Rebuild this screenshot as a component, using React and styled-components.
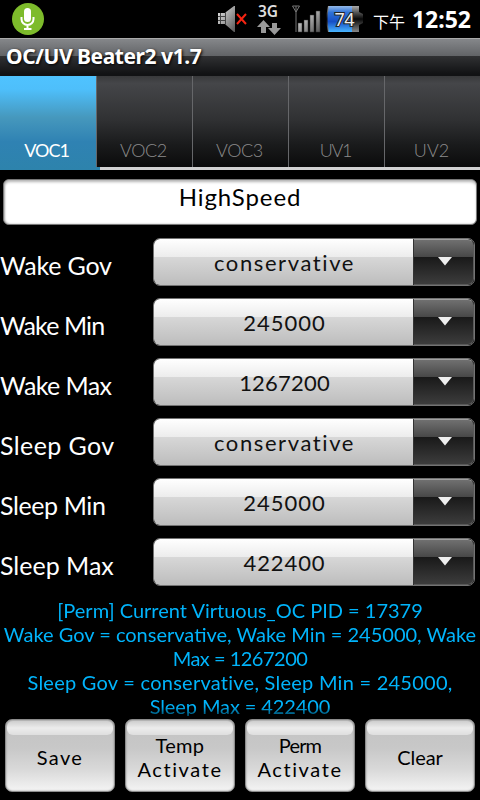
import styled, { createGlobalStyle } from 'styled-components';

const GlobalStyle = createGlobalStyle`
  * {
    box-sizing: border-box;
  }

  body {
    margin: 0;
    background: #000;
  }
`;

const Screen = styled.div`
  width: 480px;
  height: 800px;
  display: flex;
  flex-direction: column;
  overflow: hidden;
  background: #000;
  font-family: Lato, 'Open Sans', sans-serif;
`;

const StatusBar = styled.header`
  height: 38px;
  display: flex;
  align-items: center;
  padding: 0 9px 0 12px;
  color: #fff;

  svg {
    display: block;
    flex: none;
  }
`;

const StatusIcons = styled.div`
  display: flex;
  align-items: center;
  margin-left: auto;
`;

const Clock = styled.div`
  display: flex;
  align-items: baseline;
  gap: 7px;
  margin-left: 9px;
  font: 700 23px/38px 'Noto Sans', 'Open Sans', sans-serif;

  small {
    font: 400 16px 'Noto Sans CJK TC', sans-serif;
  }
`;

const TitleBar = styled.div`
  height: 38px;
  padding-left: 6px;
  border-top: 1px solid #aaa;
  border-bottom: 2px solid #111214;
  background: linear-gradient(#85878a, #626467 48%, #303133 49%, #111214);
  color: #fff;
  font: 700 21px/35px 'Noto Sans', 'Open Sans', sans-serif;
  letter-spacing: -0.45px;
  text-shadow: 1px 1px 3px #000;
`;

const Tabs = styled.nav`
  height: 94px;
  display: grid;
  grid-template-columns: repeat(5, 96px);
  background: linear-gradient(90deg, #2d83ac 100px, #d2d2d2 100px) bottom / 100% 3px no-repeat;
`;

const Tab = styled.div`
  height: ${(p) => (p.$active ? 94 : 91)}px;
  padding: 62px ${(p) => (p.$active ? 3 : 2)}px 0 0;
  border-left: ${(p) => (p.$active ? 0 : '1px solid #66676a')};
  background: ${(p) =>
    p.$active
      ? 'linear-gradient(#4fc3ff, #4ebffb 14%, #4698bd 44%, #2f82b3 70%, #2d83ac)'
      : 'linear-gradient(#38393b, #454649 8%, #303133 48%, #1a1b1c 75%, #0b0b0b)'};
  color: ${(p) => (p.$active ? '#fff' : '#8c8c8c')};
  font-size: 18px;
  font-weight: ${(p) => (p.$active ? 400 : 300)};
  line-height: 24px;
  letter-spacing: ${(p) => p.$spacing}px;
  text-align: center;
`;

const ProfileName = styled.div`
  height: 46px;
  margin: 9px 3px 0;
  border: 1px solid #777;
  border-radius: 6px;
  background: #fff;
  box-shadow: inset 0 3px 3px -1px #b5b5b5, inset 1px 0 2px #aaa;
  color: #000;
  font-size: 24px;
  line-height: 34px;
  letter-spacing: 0.9px;
  text-align: center;
`;

const Settings = styled.div`
  display: flex;
  flex-direction: column;
  gap: 12px;
  padding: 13px 5px 0 0;
`;

const SettingRow = styled.div`
  height: 48px;
  display: flex;
  justify-content: space-between;
`;

const Label = styled.span`
  padding-top: 12px;
  color: #fff;
  font-size: 25px;
  line-height: 30px;
  letter-spacing: ${(p) => p.$spacing}px;
  white-space: nowrap;
`;

const Spinner = styled.div`
  width: 322px;
  display: flex;
  border: 1px solid #737373;
  border-radius: 7px;
  overflow: hidden;
`;

const SpinnerValue = styled.div`
  flex: 1;
  padding-left: 2px;
  background: linear-gradient(#fff, #ececec 39%, #d7d7d7 40%, #bdbdbd);
  color: #111;
  font-size: 22px;
  line-height: 48px;
  letter-spacing: ${(p) => p.$spacing}px;
  text-align: center;
`;

const SpinnerButton = styled.div`
  width: 61px;
  display: flex;
  justify-content: center;
  padding: 17px 0 0 3px;
  border: 1px solid #585858;
  border-left-color: #333;
  border-top-color: #a0a0a0;
  border-radius: 0 6px 6px 0;
  background: linear-gradient(#707070, #484848 38%, #191919 39%, #3c3c3c);
`;

const Status = styled.div`
  height: 118px;
  margin-top: 12px;
  overflow: hidden;
  color: #00b4fb;
  font-size: 20px;
  line-height: 24px;
  text-align: center;
  white-space: nowrap;
  mask-image: linear-gradient(#000 92%, rgba(0, 0, 0, 0.4));
`;

const StatusLine = styled.div`
  letter-spacing: ${(p) => p.$spacing}px;
`;

const Actions = styled.footer`
  display: grid;
  grid-template-columns: repeat(4, 110px);
  gap: 10px;
  padding: 3px 5px 0;
`;

const ActionButton = styled.button`
  position: relative;
  height: 73px;
  padding: 2px 0 0;
  border: 1px solid #8c8c8c;
  border-radius: 7px;
  background: linear-gradient(#c2c2c2, #c8c8c8 40%, #d9d9d9 70%, #f4f4f4);
  box-shadow: inset 0 0 2px #888;
  color: #000;
  font: 400 20px/24px Lato, sans-serif;

  &::before {
    content: '';
    position: absolute;
    inset: 1px 1px auto;
    height: 14px;
    border-radius: 6px;
    background: linear-gradient(#cecece, #ececec 50%, #dedede);
  }
`;

const ActionWord = styled.span`
  position: relative;
  display: block;
  letter-spacing: ${(p) => p.$spacing}px;
`;

const tabs = [
  { name: 'VOC1', spacing: -1 },
  { name: 'VOC2', spacing: -0.4 },
  { name: 'VOC3', spacing: -0.4 },
  { name: 'UV1', spacing: -1.2 },
  { name: 'UV2', spacing: 0 },
];

const settings = [
  { label: 'Wake Gov', value: 'conservative', labelSpacing: -0.2, valueSpacing: 1.6 },
  { label: 'Wake Min', value: '245000', labelSpacing: -0.9, valueSpacing: 1 },
  { label: 'Wake Max', value: '1267200', labelSpacing: -0.6, valueSpacing: 0.2 },
  { label: 'Sleep Gov', value: 'conservative', labelSpacing: 0.4, valueSpacing: 1.6 },
  { label: 'Sleep Min', value: '245000', labelSpacing: -0.4, valueSpacing: 1 },
  { label: 'Sleep Max', value: '422400', labelSpacing: 0, valueSpacing: 0.9 },
];

const statusLines = [
  { text: '[Perm] Current Virtuous_OC PID = 17379', spacing: 0 },
  { text: 'Wake Gov = conservative, Wake Min = 245000, Wake', spacing: 0 },
  { text: 'Max = 1267200', spacing: -0.5 },
  { text: 'Sleep Gov = conservative, Sleep Min = 245000,', spacing: 0.25 },
  { text: 'Sleep Max = 422400', spacing: -0.1 },
];

const actions = [
  [{ word: 'Save', spacing: 1.4 }],
  [{ word: 'Temp', spacing: 0.3 }, { word: 'Activate', spacing: 1.6 }],
  [{ word: 'Perm', spacing: -0.8 }, { word: 'Activate', spacing: 1.6 }],
  [{ word: 'Clear', spacing: -0.1 }],
];

function MicIcon() {
  return (
    <svg width="32" height="38" viewBox="0 0 32 38">
      <circle cx="16" cy="19" r="16" fill="#7dbb2b" />
      <rect x="12" y="8" width="7" height="14" rx="3.5" fill="#fff" />
      <path d="M9.5 17v2a6 6 0 0 0 12 0v-2M15.5 25v4M12 29h7.5" fill="none" stroke="#fff" strokeWidth="2" />
    </svg>
  );
}

// muted speaker, 3G arrows, antenna with bars and the battery
function SystemIcons() {
  return (
    <svg width="148" height="38" viewBox="215 0 148 38">
      <defs>
        <linearGradient id="metal" x2="1" y2="1">
          <stop stopColor="#eee" />
          <stop offset="1" stopColor="#555" />
        </linearGradient>
        <linearGradient id="charge" x2="0" y2="1">
          <stop stopColor="#92b8e8" />
          <stop offset=".25" stopColor="#2f72d8" />
          <stop offset=".6" stopColor="#164fc6" />
          <stop offset="1" stopColor="#49b5ff" />
        </linearGradient>
        <linearGradient id="shell" x2="0" y2="1">
          <stop stopColor="#aaa" />
          <stop offset=".25" stopColor="#555" />
          <stop offset=".5" stopColor="#080808" />
          <stop offset="1" stopColor="#888" />
        </linearGradient>
      </defs>
      <path d="M217 13h7v11h-7zM225 12l8-6h1v26h-1l-8-7z" fill="url(#metal)" />
      <path d="M217 16.5h7M217 20.5h7M219.5 13v11M224.5 12v13" stroke="#444" />
      <path d="M236 14l9 10M245 14l-9 10" stroke="#f52412" strokeWidth="2" />
      <text x="257" y="17" fill="#ddd" fontFamily="Noto Sans" fontSize="16" fontWeight="600" textLength="20" lengthAdjust="spacingAndGlyphs">3G</text>
      <path d="M262.500 20l6.500 7h-4v6h-5v-6h-4z" fill="#999" />
      <path d="M273.500 35l-6.500-7h4v-5h5v5h4z" fill="#999" />
      <path d="M291.500 6h7l-3.500 6zM295 6v26" fill="none" stroke="#777" />
      <path d="M297 23h4v9h-4zM303 20h4v12h-4zM309 15h4v17h-4zM315 11h4v21h-4z" fill="url(#metal)" stroke="#333" strokeWidth=".5" />
      <path d="M327 6h31v6l4 2v9l-4 2v7h-31q-3-13 0-26z" fill="url(#shell)" />
      <path d="M328 6h23v26h-23q-3-13 0-26z" fill="url(#charge)" />
      <text x="333.500" y="25.500" fill="#eee" stroke="#222" strokeWidth="2" paintOrder="stroke" fontFamily="Noto Sans" fontSize="18" textLength="20">74</text>
    </svg>
  );
}

function Arrow() {
  return (
    <svg width="14" height="9" viewBox="0 0 14 9">
      <path d="M0 0h14L7 8.500z" fill="#eee" />
    </svg>
  );
}

export default function App() {
  return (
    <Screen>
      <GlobalStyle />
      <StatusBar>
        <MicIcon />
        <StatusIcons>
          <SystemIcons />
          <Clock><small>下午</small>12:52</Clock>
        </StatusIcons>
      </StatusBar>
      <TitleBar>OC/UV Beater2 v1.7</TitleBar>
      <Tabs>
        {tabs.map((tab, idx) => (
          <Tab key={tab.name} $active={idx === 0} $spacing={tab.spacing}>{tab.name}</Tab>
        ))}
      </Tabs>
      <ProfileName>HighSpeed</ProfileName>
      <Settings>
        {settings.map((row) => (
          <SettingRow key={row.label}>
            <Label $spacing={row.labelSpacing}>{row.label}</Label>
            <Spinner>
              <SpinnerValue $spacing={row.valueSpacing}>{row.value}</SpinnerValue>
              <SpinnerButton><Arrow /></SpinnerButton>
            </Spinner>
          </SettingRow>
        ))}
      </Settings>
      <Status>
        {statusLines.map((line) => (
          <StatusLine key={line.text} $spacing={line.spacing}>{line.text}</StatusLine>
        ))}
      </Status>
      <Actions>
        {actions.map((words, idx) => (
          <ActionButton key={idx}>
            {words.map(({ word, spacing }) => (
              <ActionWord key={word} $spacing={spacing}>{word}</ActionWord>
            ))}
          </ActionButton>
        ))}
      </Actions>
    </Screen>
  );
}
